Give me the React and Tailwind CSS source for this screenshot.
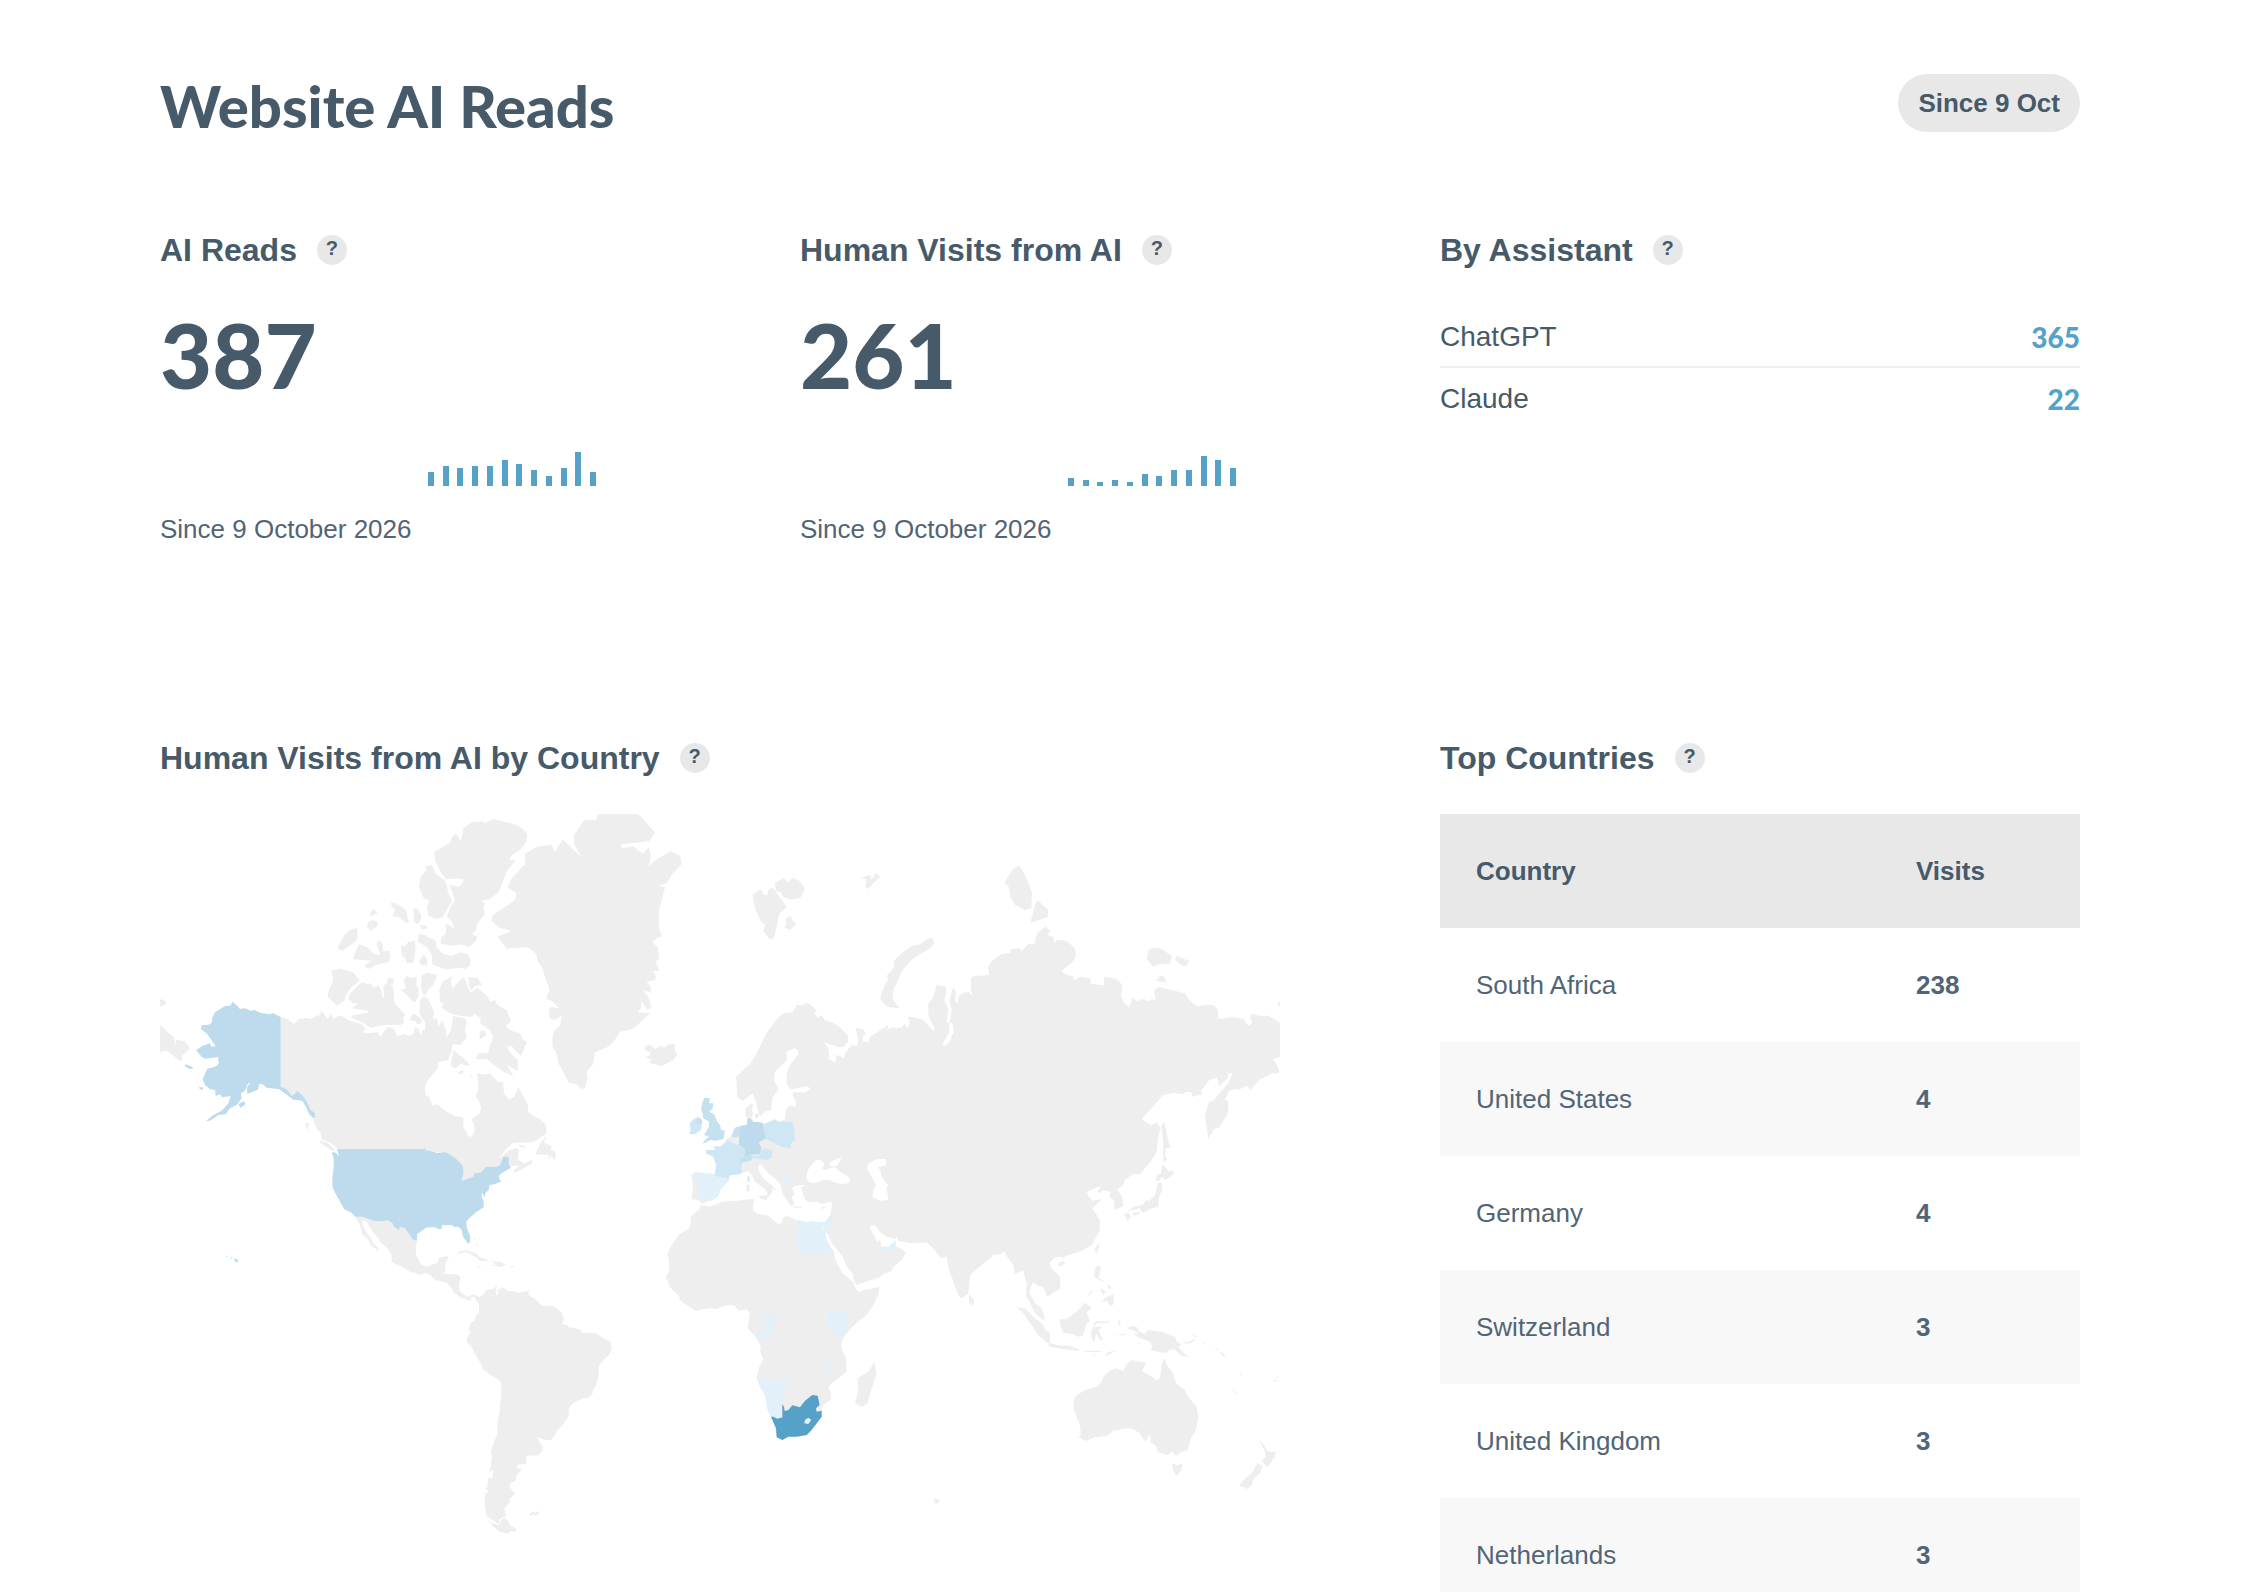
const reads = [14, 20, 18, 20, 20, 26, 22, 16, 10, 18, 34, 14]
const visits = [8, 6, 4, 6, 4, 12, 10, 16, 16, 30, 26, 18]

const assistants = [
  { name: 'ChatGPT', count: 365 },
  { name: 'Claude', count: 22 }
]

const countries = [
  { name: 'South Africa', visits: 238 },
  { name: 'United States', visits: 4 },
  { name: 'Germany', visits: 4 },
  { name: 'Switzerland', visits: 3 },
  { name: 'United Kingdom', visits: 3 },
  { name: 'Netherlands', visits: 3 }
]

// fill per visit level, from no visits up to the top country
const LAND = '#eeeeee'
const L1 = '#e1f0f9'
const L2 = '#cfe6f4'
const L3 = '#c5e0ef'
const L4 = '#bedbed'
const TOP = '#55a1c8'

// each region has its own origin on the map
const regions = [
  {
    id: 'north-america',
    at: 'translate(-30 -42)',
    shapes: [
      // canada
      [LAND, 'M392 651 411 656 432 672 447 657 470 654 485 657 500 645 509 647 514 631 524 645 533 657 544 639 551 658 562 648 573 647 600 662 622 668 635 672 648 687 637 696 645 700 683 697 692 710 703 693 714 682 732 686 736 697 743 708 760 702 780 707 792 700 793 682 806 687 812 709 817 690 825 691 825 668 808 640 810 600 822 588 835 598 853 638 848 655 862 656 864 680 876 662 886 685 891 712 903 690 909 648 945 655 950 668 945 688 950 712 932 735 908 733 905 752 895 780 865 787 862 808 835 838 825 860 826 885 838 890 847 918 862 913 890 935 915 948 940 952 940 980 953 1005 963 1012 972 1000 974 985 970 965 963 960 990 938 993 920 985 900 976 888 986 868 982 820 1000 824 1020 820 1043 845 1059 846 1062 880 1078 899 1092 890 1106 862 1135 918 1133 933 1150 948 1170 957 1188 975 1190 1000 1150 1027 1090 1028 1070 1045 1047 1077 1075 1053 1100 1043 1107 1050 1103 1078 1120 1090 1133 1085 1145 1080 1147 1090 1130 1100 1095 1118 1090 1112 1110 1097 1082 1097 1076 1070 1060 1070 1050 1095 1040 1100 1007 1101 992 1118 972 1120 970 1130 936 1142 941 1115 938 1097 920 1080 887 1058 850 1055 826 1050 823 1041 820 1047 562 1047 545 1030 515 1018 512 998 500 988 490 962 494 945 460 900 440 874 428 888 392 860z'],
      // arctic islands
      [LAND, 'M543 512 573 506 610 517 629 541 606 560 587 585 583 602 561 617 533 590 536 570 543 558 550 535z M636 546 650 552 660 550 672 563 685 556 694 570 697 592 702 590 700 560 710 548 730 560 733 610 765 643 760 655 762 668 752 675 700 675 665 683 648 675 640 668 620 660 603 652 610 645 653 638 655 632 605 625 625 610 608 610 595 597 598 585 615 565z M712 535 730 535 732 545 724 560 712 548z M622 382 623 415 612 428 575 453 562 443 580 410 595 392z M627 433 655 443 670 462 690 465 679 430 688 420 697 430 700 455 710 452 718 452 721 470 715 487 685 492 655 507 645 502 648 492 665 482 610 478 615 458z M655 365 670 360 682 365 682 378 662 392 650 380z M668 326 683 340 658 349z M723 305 742 312 768 330 777 369 765 367 745 350 727 348 735 330 725 320z M789 325 803 328 815 347 812 362 800 372 792 362z M810 375 830 377 833 385 815 389z M753 437 765 438 775 426 795 423 797 450 790 488 770 490 766 475 755 465z M822 463 832 480 832 497 815 496 806 486z M762 540 770 528 782 533 800 530 800 548 797 552 806 568 805 590 795 607 785 602 775 590 752 568 767 565z M815 527 830 518 863 525 850 555 832 572 828 585 818 582 813 560z M790 640 815 657 813 672 803 672 795 663 778 660z M806 402 825 405 833 412 855 420 861 443 880 462 905 468 930 457 952 462 963 480 960 497 945 508 935 503 885 508 847 493 845 465 830 440 803 425z M825 198 845 195 858 222 888 245 895 280 907 302 890 330 878 352 860 357 835 348 831 320 838 300 822 297 807 262 812 230 830 210z'],
      [LAND, 'M853 155 898 130 912 102 924 107 932 125 940 85 965 67 1000 64 1002 70 1030 57 1095 73 1115 83 1132 102 1130 125 1110 150 1085 165 1078 180 1097 180 1070 215 1045 278 1018 297 995 303 1005 312 1000 322 1005 342 982 370 977 392 965 402 982 410 978 422 957 442 935 433 908 437 872 432 873 413 888 400 887 370 913 385 905 363 890 350 902 320 913 303 912 290 898 255 928 260 943 240 925 235 888 238 872 215 855 180z'],
      [LAND, 'M907 528 902 545 908 568 918 552 942 530 955 565 962 577 983 563 1012 588 1020 605 1035 600 1042 614 1070 630 1083 662 1068 677 1080 690 1110 700 1118 718 1131 725 1113 767 1095 752 1085 737 1073 740 1078 755 1103 780 1104 812 1092 808 1072 795 1090 828 1060 815 1035 797 1012 778 977 778 985 760 1015 758 1018 740 1030 712 1020 690 990 670 992 655 973 642 967 650 930 648 900 640 873 622 882 612 870 605 868 570 877 545z M955 531 982 533 996 555 978 558 962 570 957 555z M995 690 1008 695 1007 708 990 717 988 700z M910 750 945 778 960 795 948 798 935 790 917 805 902 797z M935 810 943 815 930 824 925 818z M960 822 967 828 963 834z'],
      // far east tip, across the date line
      [LAND, 'M30 674 48 692 72 712 77 735 79 719 105 724 120 745 110 755 98 765 95 782 85 780 70 767 55 755 40 752 30 758z M30 598 42 600 49 609 38 618 30 620z'],
      // alaska
      [L4, 'M392 651 370 640 358 643 330 638 312 629 303 633 285 625 270 627 262 617 248 605 241 617 225 618 195 637 188 650 185 668 175 674 155 676 152 686 172 702 182 717 197 738 183 740 180 730 158 737 138 751 155 770 165 776 205 771 204 780 207 790 200 797 190 802 172 806 160 832 158 840 165 855 180 868 195 870 197 888 210 883 217 892 242 888 235 910 215 932 190 945 168 963 180 962 205 946 228 942 240 925 260 915 275 895 273 880 285 872 293 852 303 845 291 862 292 882 312 874 325 868 327 852 336 852 350 863 388 868 410 884 430 899 457 902 468 920 477 942 490 955 495 952 494 938 482 930 470 905 458 887 442 873 426 888 410 868 392 860z M265 912 282 904 287 912 272 924z M104 793 118 797 131 803 122 808 106 800z M146 862 160 862 158 869 150 868z'],
      // hawaii
      [L4, 'M253 1374 265 1380 261 1388 254 1384z M227 1366 233 1369 229 1371z M240 1371 248 1374 244 1376z']
    ]
  },
  {
    id: 'greenland',
    at: 'translate(720 -42)',
    shapes: [
      [LAND, 'M595 42 715 42 765 97 748 124 662 133 667 145 700 139 728 162 747 142 753 165 745 200 770 178 812 154 841 168 845 193 815 225 800 250 775 258 795 262 777 330 777 385 787 410 775 412 757 425 775 445 777 475 767 485 778 513 758 513 768 527 765 540 740 545 752 560 752 578 728 570 745 590 755 625 740 628 725 603 722 625 713 637 750 640 705 682 690 690 660 695 640 727 625 740 585 757 578 795 560 815 563 835 555 866 543 866 528 851 507 850 492 820 475 790 470 760 458 740 457 712 462 692 480 677 485 648 462 660 450 655 447 625 455 620 480 626 455 602 438 597 449 570 425 500 412 483 410 465 388 445 375 442 320 446 293 410 335 393 297 383 275 362 276 347 345 300 350 280 323 262 335 235 375 193 375 162 410 140 455 134 464 156 489 118 520 150 543 168 522 132 522 105 553 60 587 60z'],
      // iceland
      [LAND, 'M737 738 750 735 767 748 780 737 795 742 808 733 824 732 824 748 831 763 820 780 785 798 748 788 755 780 737 770 752 765 750 757 733 750z']
    ]
  },
  {
    id: 'americas',
    at: 'translate(420 858)',
    shapes: [
      [LAND, 'M165 350 178 372 185 390 187 405 205 420 212 435 235 452 237 446 220 430 212 412 198 395 188 375 186 362 198 362 205 375 220 398 236 415 240 425 262 445 275 465 274 483 285 492 310 502 330 515 362 524 378 519 392 526 405 540 440 548 457 567 460 580 468 580 480 593 500 598 508 604 514 596 512 592 524 590 528 600 537 612 537 638 526 650 524 662 512 668 505 690 514 696 500 714 502 730 513 738 527 765 545 795 550 810 600 843 605 855 604 880 598 945 593 955 592 1000 573 1052 576 1075 568 1120 577 1110 580 1113 576 1137 565 1133 562 1160 555 1167 566 1172 555 1185 554 1215 559 1247 595 1272 602 1255 618 1249 613 1225 628 1210 630 1195 645 1182 628 1160 633 1148 647 1143 650 1125 665 1110 660 1105 652 1108 652 1094 678 1092 678 1068 715 1066 727 1052 729 1042 718 1025 712 1012 735 1020 752 1020 766 1005 768 995 788 975 806 948 806 925 820 908 850 895 867 893 877 882 880 868 888 858 896 825 897 798 912 778 928 765 935 745 932 725 915 718 888 700 862 698 846 698 842 690 810 680 806 684 803 676 786 673 792 658 785 637 765 622 750 617 725 618 710 600 690 588 683 578 690 572 670 575 652 578 645 574 623 573 606 560 603 567 593 568 594 585 588 586 587 572 592 556 580 566 557 570 553 580 540 592 520 583 502 590 480 575 477 560 482 532 470 523 430 522 436 512 437 490 447 468 418 472 412 488 380 500 362 492 347 462 350 420 300 340 200 340z'],
      [LAND, 'M562 1255 575 1268 597 1275 606 1256 618 1255 630 1275 650 1288 646 1296 634 1293 622 1302 598 1294 580 1280z M688 1243 698 1234 706 1239 714 1233 719 1239 708 1247 700 1243 692 1248z'],
      // caribbean
      [LAND, 'M468 464 480 454 498 450 520 457 530 462 540 472 564 480 562 483 538 482 535 476 510 462 495 455z M573 483 600 485 620 495 598 501 590 498 563 498 588 496 582 487z M527 499 546 501 538 504z M632 497 647 499 634 502z M520 415 531 413 524 417z M537 412 541 415 538 421z M528 430 534 433 533 443z'],
      // coastal islands of canada
      [LAND, 'M58 122 78 127 98 142 106 155 92 150 75 138 62 130z M14 70 28 70 24 85 33 98 24 92z M740 108 732 128 755 137 753 150 765 153 767 175 760 180 757 168 742 177 748 165 706 163 712 150 722 128z M656 133 680 142 676 145 660 140z'],
      // united states
      [L4, 'M112 147 370 147 373 141 376 150 400 155 412 159 437 156 470 178 488 197 491 215 486 242 520 230 522 220 542 218 557 201 590 200 600 195 610 170 626 170 628 193 633 203 605 220 597 228 599 240 606 243 585 252 568 256 566 270 556 280 553 293 546 277 545 290 551 305 551 322 530 335 505 357 499 365 501 385 511 410 510 427 504 431 489 410 485 390 475 380 463 381 455 375 427 376 424 387 415 387 403 381 378 383 352 402 350 423 337 418 325 398 313 383 300 382 296 390 282 380 278 370 262 360 247 364 220 362 188 350 165 350 155 338 133 328 122 308 102 272 97 258 97 230 101 205 101 175 95 156 108 158 116 170z']
    ]
  },
  {
    id: 'europe-north',
    at: 'translate(1440 138)',
    shapes: [
      // svalbard, franz josef land, novaya zemlya
      [LAND, 'M338 105 362 88 372 105 382 105 386 87 400 84 440 141 418 162 412 190 402 235 390 238 369 213 376 197 362 183 345 145z M403 70 432 54 446 68 455 53 478 62 495 86 483 112 455 119 428 110 423 97 410 95z M435 177 452 167 457 180 469 192 450 210 434 202 440 188z M662 53 690 45 694 60 708 38 721 50 700 70 685 87 676 80 680 58z M878 233 883 250 870 265 820 295 788 330 760 390 758 418 778 444 742 441 722 420 722 405 730 385 746 355 740 348 762 322 762 302 785 280 815 258 843 252 860 237z'],
      // mainland, with the black, azov and caspian seas cut out
      [LAND, 'M470 434 485 436 505 429 530 450 522 460 533 473 543 465 555 481 580 488 600 502 624 527 624 545 612 560 595 562 552 547 565 565 568 598 585 608 590 584 612 595 616 578 635 555 651 558 655 540 646 503 670 508 678 522 668 528 668 545 685 546 690 530 745 495 742 510 755 503 785 503 793 492 803 505 810 490 803 470 825 472 850 480 880 512 884 505 866 470 864 433 880 410 890 375 918 380 919 400 913 420 925 450 920 485 928 490 928 515 907 555 915 557 932 545 935 525 942 520 937 490 928 488 935 450 928 420 940 380 947 395 946 425 952 430 955 410 970 398 988 397 1000 412 993 390 993 353 1020 348 1048 347 1044 325 1055 305 1080 290 1100 290 1100 1150 920 1185 902 1193 890 1175 868 1150 860 1147 815 1149 775 1143 770 1130 765 1138 740 1130 722 1118 710 1102 700 1095 690 1100 695 1115 705 1130 712 1148 716 1140 722 1145 724 1160 745 1160 767 1140 768 1160 780 1163 798 1178 785 1200 760 1220 755 1233 725 1245 720 1252 650 1274 645 1272 637 1240 620 1220 608 1190 575 1150 567 1130 560 1115 570 1075 575 1040 577 1030 570 1025 545 1032 530 1025 505 1027 492 1015 488 995 482 985 497 975 485 975 465 978 455 985 465 1003 455 1010 462 1030 455 1040 440 1020 430 1005 425 990 422 975 410 960 385 940 372 925 362 912 355 918 355 930 370 955 400 980 408 990 398 988 395 998 385 1010 378 1018 383 1000 372 985 345 965 335 945 325 933 305 940 300 942 270 945 267 962 240 990 237 1005 220 1020 200 1024 188 1030 178 1020 155 1018 158 990 157 955 153 945 165 937 225 942 228 915 220 890 198 880 200 870 225 870 222 858 240 860 262 838 275 830 282 805 300 797 322 795 320 775 315 765 316 745 335 730 340 735 335 748 340 760 335 775 345 785 355 790 375 795 400 780 415 785 435 778 438 750 450 735 462 740 467 738 466 718 457 708 460 697 495 697 511 688 503 678 460 687 450 688 440 672 440 637 450 615 475 583 475 572 462 564 440 575 440 600 405 635 402 660 416 688 398 712 393 750 375 755 362 769 355 760 348 725 338 700 308 722 292 712 288 650 330 612 350 580 380 518 418 468 438 458 458 457z M500 940 505 928 515 915 530 898 550 905 552 915 545 925 555 930 570 925 585 922 600 935 622 948 630 960 625 970 605 972 590 969 565 960 550 960 530 968 512 968 500 960z M567 912 572 905 592 896 606 891 598 905 590 918 572 920z M718 897 738 897 738 915 715 922 722 935 725 950 733 960 737 972 748 970 740 982 745 1020 720 1022 698 1012 700 990 708 975 695 950 680 925 685 912 705 900z'],
      // mediterranean islands and zealand
      [LAND, 'M345 762 355 758 357 770 345 777z M357 1008 383 1006 380 1022 360 1014z M318 975 328 973 330 992 320 995z M458 1038 485 1041 485 1044 462 1043z M540 1043 560 1037 550 1047z']
    ]
  },
  {
    id: 'asia-north',
    at: 'translate(2400 138)',
    shapes: [
      [LAND, 'M40 412 33 390 33 353 48 347 92 345 84 325 95 303 125 282 150 278 152 268 178 264 185 273 205 252 223 252 233 218 257 199 271 213 262 224 281 232 282 250 290 240 320 242 345 265 347 290 338 305 303 335 330 348 338 345 342 362 360 350 390 355 394 372 432 376 432 350 470 357 485 373 487 393 482 407 493 430 508 441 517 413 532 424 547 416 563 424 575 417 587 420 582 395 593 380 675 400 685 417 710 439 745 434 762 436 774 450 774 473 787 477 810 472 850 476 866 498 877 488 870 475 875 461 900 467 925 467 960 488 960 590 940 597 958 630 955 641 938 640 900 658 872 689 860 677 835 690 830 686 808 692 795 718 805 725 805 755 795 775 777 803 762 808 745 837 735 768 747 725 760 722 808 665 817 640 806 640 803 655 778 678 770 653 748 660 723 692 730 703 697 710 695 697 680 695 670 702 640 699 610 705 545 778 573 796 590 787 602 805 595 830 590 875 572 905 540 942 517 943 493 962 492 972 472 990 487 1010 490 1038 463 1050 463 1022 447 1010 452 995 428 990 420 1000 412 995 422 978 380 995 385 1008 398 1022 425 1018 397 1045 420 1080 420 1105 395 1155 360 1160 -60 1150 -60 600z'],
      // sakhalin, japan, taiwan
      [LAND, 'M613 785 622 830 631 863 618 865 615 885 622 900 610 905 610 870 607 820 603 800z M608 913 625 932 640 932 640 942 618 960 605 952 595 965 588 962 590 945 602 942z M593 968 605 968 607 990 597 1010 595 1040 570 1047 553 1058 543 1055 540 1045 512 1052 500 1058 520 1040 548 1035 560 1018 565 1025 585 1005 590 985z M490 1063 505 1060 513 1068 502 1087 500 1075z M518 1058 538 1055 538 1062 520 1068z M417 1148 418 1158 410 1182 403 1168z'],
      // siberian islands
      [LAND, 'M178 16 197 48 216 98 214 145 195 151 165 135 152 115 146 80 133 68 158 28z M235 122 265 150 263 172 211 188 228 125z M578 264 600 265 636 287 630 312 595 313 580 321 561 297 565 270z M648 288 687 302 680 319 663 315 646 300z M600 347 610 348 622 368 588 362z M960 422 952 435 960 441z']
    ]
  },
  {
    id: 'asia-south-oceania',
    at: 'translate(2220 1008)',
    shapes: [
      [LAND, 'M-40 200 0 273 35 278 80 277 105 300 110 310 122 323 140 320 147 360 158 388 172 430 184 446 205 430 210 375 245 345 272 323 280 315 307 310 312 303 322 322 340 345 343 373 370 362 380 400 378 440 390 455 395 470 405 490 432 512 434 505 425 475 405 460 395 440 388 430 398 397 410 405 430 412 442 440 482 415 480 380 455 355 448 338 465 322 490 320 490 328 497 318 545 303 575 285 600 240 600 212 570 175 300 150z'],
      [LAND, 'M475 340 490 333 495 338 485 348 476 347z M208 432 222 450 222 463 210 465 206 448z'],
      // indonesia
      [LAND, 'M350 472 375 475 400 500 430 525 432 535 450 550 450 578 440 578 410 550 395 525 370 490z M450 578 470 585 510 587 540 600 535 603 490 598 450 590 445 583z M552 602 605 602 600 606 555 606z M613 620 625 607 647 601 632 612 617 619z M575 613 588 616 583 620z M480 508 500 506 530 485 555 458 575 475 560 487 570 515 560 520 548 557 535 560 520 553 490 548 480 525z M583 518 592 514 620 515 627 510 625 518 590 520 582 530 608 530 595 540 610 572 600 570 588 550 584 575 578 572 572 550 578 535z M655 505 662 520 655 528z M655 553 680 552 668 557z M640 552 647 554 641 557z M715 577 719 578 715 585z'],
      // philippines
      [LAND, 'M590 347 603 348 600 370 595 385 618 395 605 393 583 382 583 362z M620 400 635 412 628 420z M602 413 617 425 612 435 603 425z M640 432 641 462 632 468 620 452 603 458 615 445z M578 418 575 428 558 442z'],
      // new guinea and the islands east of it
      [LAND, 'M680 533 700 528 713 533 715 543 732 552 745 540 785 545 825 560 830 575 845 583 835 590 850 608 868 622 845 618 822 597 808 600 798 610 750 600 757 595 750 575 720 565 700 553 718 550 700 542z M847 577 865 577 880 568 888 565 878 577 860 582z M868 546 888 557 888 565 880 555z M905 570 918 583 912 582z M942 592 958 600 950 600z M957 605 970 610 977 624 965 615z M993 714 1022 738 1005 728z M1017 663 1022 668 1028 678 1022 674z M1118 690 1130 690 1125 697z M1128 683 1140 678 1132 685z'],
      // australia and tasmania
      [LAND, 'M792 625 800 645 817 665 828 700 855 720 860 735 890 770 895 800 888 840 873 865 862 903 845 905 828 918 815 905 802 916 775 905 765 885 753 878 750 852 738 872 732 872 720 850 700 838 680 834 640 843 620 858 585 862 558 873 535 862 543 855 540 828 522 780 520 755 527 738 555 720 590 710 605 695 610 680 625 665 645 654 670 663 680 642 697 630 715 635 738 637 727 663 770 690 780 685 785 645z M815 940 830 945 846 942 845 960 830 977 820 962z'],
      // new zealand, kerguelen
      [LAND, 'M1075 867 1092 885 1100 900 1115 907 1128 904 1125 920 1113 937 1103 950 1095 945 1085 930 1098 920 1093 900z M1073 940 1088 948 1080 970 1062 985 1055 1005 1043 1017 1017 1007 1030 990 1055 970z M103 1045 119 1050 115 1060 103 1061z']
    ]
  },
  {
    id: 'africa-europe',
    at: 'translate(1440 798)',
    shapes: [
      [LAND, 'M183 375 205 380 225 375 245 365 290 362 335 357 345 358 340 370 338 390 350 400 385 408 415 433 425 428 430 412 440 408 470 420 500 427 515 423 540 428 545 450 560 480 580 515 588 545 608 580 640 607 645 622 655 635 718 620 717 640 700 675 680 705 650 728 630 748 612 770 603 792 608 815 617 830 620 875 570 915 565 925 573 940 572 960 550 975 545 990 545 1010 515 1050 500 1065 470 1070 445 1070 427 1080 410 1072 405 1040 392 1010 383 990 375 945 360 920 350 890 358 860 370 838 360 815 362 800 345 768 323 745 330 700 320 688 295 692 282 675 255 677 228 687 210 684 168 692 135 673 120 660 117 648 88 620 84 602 77 595 88 570 87 540 81 525 90 505 105 480 120 462 145 447 150 440 153 408 178 388z M702 848 710 880 700 910 682 970 665 981 645 970 655 930 652 895 685 875z'],
      // egypt, israel
      [L1, 'M472 420 500 427 515 423 540 427 553 450 560 480 585 522 474 522z M540 427 555 425 572 403 577 405 570 440 558 462 548 445z'],
      // kenya, congo, malawi, namibia, emirates, north macedonia
      [L1, 'M560 685 570 690 580 688 600 697 628 694 623 710 625 740 612 768 605 775 575 750 555 738 562 725 565 705z M363 712 383 718 395 700 411 700 408 730 395 742 388 770 355 778 347 770 355 757 372 757 378 735z M553 822 563 830 560 855 575 870 568 890 562 875 548 862 555 845z M350 893 385 898 430 901 455 897 475 900 455 905 438 908 436 940 427 940 427 1010 412 1016 400 1010 392 1010 383 990 375 945 360 920z M724 502 745 502 767 482 765 498 758 517 728 512z M432 300 445 296 455 302 450 308 433 311z'],
      // south africa
      [TOP, 'M427 973 432 980 434 993 445 990 457 976 480 982 495 962 517 945 533 947 539 975 528 985 530 995 545 992 545 1010 515 1050 500 1065 470 1070 445 1070 427 1080 410 1072 408 1045 393 1010 400 1010 412 1016 427 1012z'],
      [L1, 'M505 1013 514 1020 505 1032 493 1030 495 1020z'],
      // spain
      [L1, 'M165 277 225 282 267 293 265 303 240 330 237 345 220 360 200 363 188 372 175 360 172 340 175 303 160 300 153 288z'],
      // france, ireland, poland, austria
      [L2, 'M262 178 275 188 297 195 315 206 312 222 300 240 308 250 303 265 308 275 300 283 270 285 265 294 225 288 228 255 220 230 198 220 198 210 225 210 222 198 240 200 258 188z M322 290 328 287 329 302 323 307z M173 112 183 120 187 122 183 150 165 162 147 163 152 150 149 130 160 118z M373 132 405 118 418 126 458 127 463 150 465 180 453 190 452 205 425 200 378 178 372 155z M333 228 360 225 365 210 378 205 398 212 395 232 380 240 345 235z'],
      // united kingdom, netherlands, switzerland
      [L3, 'M193 53 210 54 207 70 220 70 218 85 208 95 222 103 232 125 240 135 243 150 255 152 250 178 225 182 212 180 187 192 197 178 208 170 192 165 198 155 207 140 207 125 200 120 190 115 188 100 183 90 187 68z M175 111 186 120 183 133 167 128z M305 137 305 150 298 165 290 172 273 172 285 143z M312 226 333 225 340 235 330 243 300 248 300 238z'],
      // germany
      [L4, 'M322 118 330 115 340 127 355 125 370 130 373 155 378 175 356 187 365 205 360 222 313 226 315 206 297 195 297 168 305 137 320 135z']
    ]
  }
]

function Heading({ children }) {
  return (
    <div className="flex items-center gap-5">
      <h2 className="text-[32px] leading-10 font-bold">{children}</h2>
      <button
        type="button"
        aria-label={`About ${children}`}
        className="flex size-[30px] items-center justify-center rounded-full bg-[#e8e8e8] pb-1 text-xl leading-none font-bold"
      >
        ?
      </button>
    </div>
  )
}

function Bars({ data }) {
  return (
    <svg width="168" height="34" viewBox="0 0 168 34" shapeRendering="crispEdges" fill={TOP} aria-hidden="true">
      {data.map((v, i) => (
        <rect key={i} x={Math.round((i * 162) / 11)} y={34 - v} width="6" height={v} />
      ))}
    </svg>
  )
}

function Stat({ title, value, data }) {
  return (
    <section>
      <Heading>{title}</Heading>
      <p className="mt-9 font-['Lato_Black','Lato',sans-serif] text-[90px] leading-[96px] font-black">{value}</p>
      <div className="mt-[50px] flex max-w-[436px] justify-end">
        <Bars data={data} />
      </div>
      <p className="mt-[25px] text-[26px] leading-9 text-[#526576]">Since 9 October 2026</p>
    </section>
  )
}

function WorldMap() {
  return (
    <svg viewBox="0 0 3360 2200" className="block w-full" role="img" aria-label="Visits by country">
      {regions.map(r => (
        <g key={r.id} transform={r.at}>
          {r.shapes.map(([fill, d], i) => (
            <path key={i} d={d} fill={fill} fillRule="evenodd" />
          ))}
        </g>
      ))}
    </svg>
  )
}

export default function App() {
  return (
    <main className="min-h-screen bg-white pt-[74px] pr-[182px] pl-40 font-['Liberation_Sans',Arial,sans-serif] text-[#465a69]">
      <header className="flex items-start justify-between">
        <h1 className="font-['Lato_Black','Lato',sans-serif] text-[58px] leading-16 font-black">Website AI Reads</h1>
        <button type="button" className="rounded-[29px] bg-[#e8e8e8] px-5 py-[11px] text-[26px] leading-9 font-bold">
          Since 9 Oct
        </button>
      </header>

      <div className="mt-[92px] grid grid-cols-3">
        <Stat title="AI Reads" value={387} data={reads} />
        <Stat title="Human Visits from AI" value={261} data={visits} />
        <section>
          <Heading>By Assistant</Heading>
          <ul className="mt-9 divide-y-2 divide-[#eeeeee]">
            {assistants.map(a => (
              <li key={a.name} className="flex items-center justify-between pt-[13px] pb-[11px] text-[28px] leading-9">
                <span>{a.name}</span>
                <span className="font-['Lato_Black','Lato',sans-serif] font-black text-[#55a1c8]">{a.count}</span>
              </li>
            ))}
          </ul>
        </section>
      </div>

      <div className="mt-[191px] grid grid-cols-3">
        <section className="col-span-2 pr-40">
          <Heading>Human Visits from AI by Country</Heading>
          <div className="mt-9">
            <WorldMap />
          </div>
        </section>
        <section>
          <Heading>Top Countries</Heading>
          <table className="mt-9 w-full text-left text-[26px] leading-[42px]">
            <thead className="bg-[#e8e8e8]">
              <tr>
                <th className="px-9 py-9">Country</th>
                <th className="w-[164px] py-9">Visits</th>
              </tr>
            </thead>
            <tbody className="text-[#526576]">
              {countries.map(c => (
                <tr key={c.name} className="even:bg-[#f8f8f8]">
                  <td className="px-9 py-9">{c.name}</td>
                  <td className="py-9 font-bold">{c.visits}</td>
                </tr>
              ))}
            </tbody>
          </table>
        </section>
      </div>
    </main>
  )
}
